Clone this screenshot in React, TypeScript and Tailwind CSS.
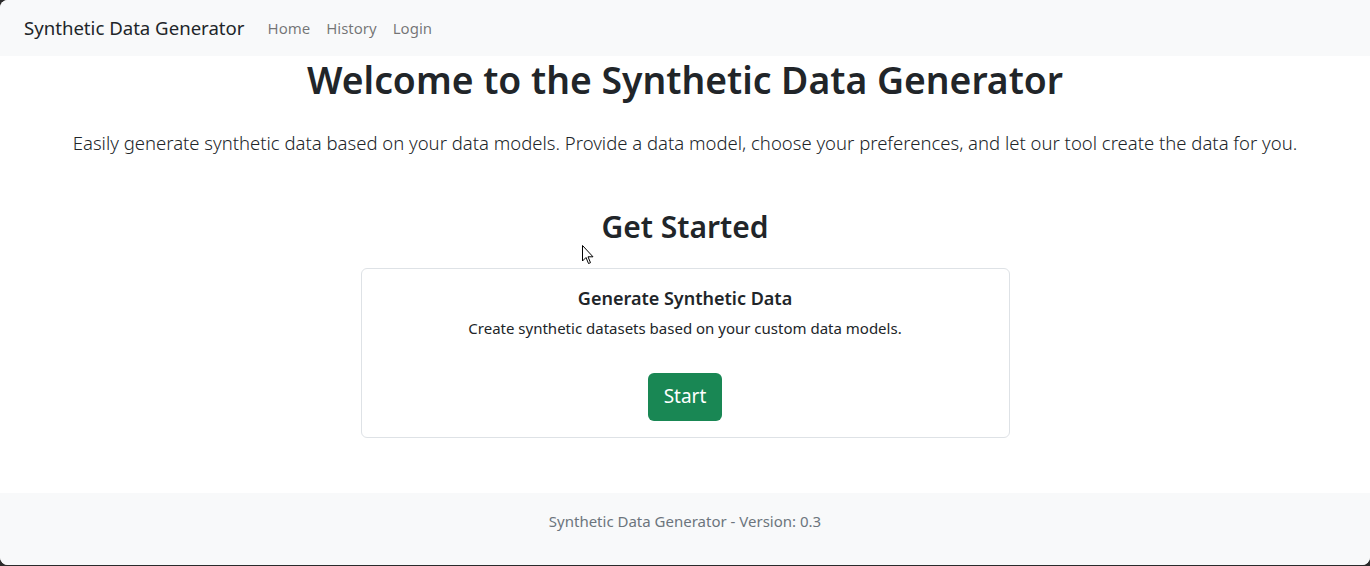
import React from 'react';

const font = { fontFamily: '"Noto Sans", "Open Sans", Arial, sans-serif' };

export default function App() {
  return (
    <div className="h-[566px] bg-[#2b2b2b]" style={font}>
      <div className="h-[565px] bg-white rounded-tl-[8px] rounded-b-[8px] overflow-hidden flex flex-col relative">
        {/* navbar */}
        <nav className="h-[56px] shrink-0 bg-[#f8f9fa] flex items-center px-[24px]">
          <span className="text-[18.6px] text-[#212529] mr-[23px]">Synthetic Data Generator</span>
          <div className="flex gap-[16px] text-[15px] text-[rgba(0,0,0,0.55)]">
            <span>Home</span>
            <span>History</span>
            <span>Login</span>
          </div>
        </nav>

        <main className="flex-1 flex flex-col items-center text-[#212529]">
          <h1 className="text-[37.3px] font-semibold leading-[1.2] mt-[2px]">Welcome to the Synthetic Data Generator</h1>
          <p className="text-[18.5px] font-light mt-[26px] text-[#212529]">
            Easily generate synthetic data based on your data models. Provide a data model, choose your preferences, and let our tool create the data for you.
          </p>
          <h2 className="text-[30px] font-semibold leading-[1.2] mt-[52px]">Get Started</h2>
          <div className="w-[649px] h-[170px] mt-[23px] border border-[#dee2e6] rounded-[6px] flex flex-col items-center pt-[19px]">
            <h5 className="text-[18px] font-semibold leading-[1.2]">Generate Synthetic Data</h5>
            <p className="text-[15px] mt-[8px]">Create synthetic datasets based on your custom data models.</p>
            <button className="mt-[33px] h-[48px] w-[74px] rounded-[6px] bg-[#198754] text-white text-[19px]">Start</button>
          </div>
        </main>

        <footer className="h-[72px] shrink-0 bg-[#f8f9fa] flex justify-center pt-[17px] text-[15px] text-[#6c757d]">
          Synthetic Data Generator - Version: 0.3
        </footer>

        {/* mouse pointer captured in screenshot */}
        <svg className="absolute left-[582px] top-[245px]" width="13" height="20" viewBox="0 0 13 20">
          <path d="M0.5 0.5 L0.5 16 L4 12.5 L6.5 18.5 L8.5 17.7 L6 11.8 L11 11.8 Z" fill="white" stroke="black" strokeWidth="1" strokeLinejoin="round" />
        </svg>
      </div>
    </div>
  );
}
